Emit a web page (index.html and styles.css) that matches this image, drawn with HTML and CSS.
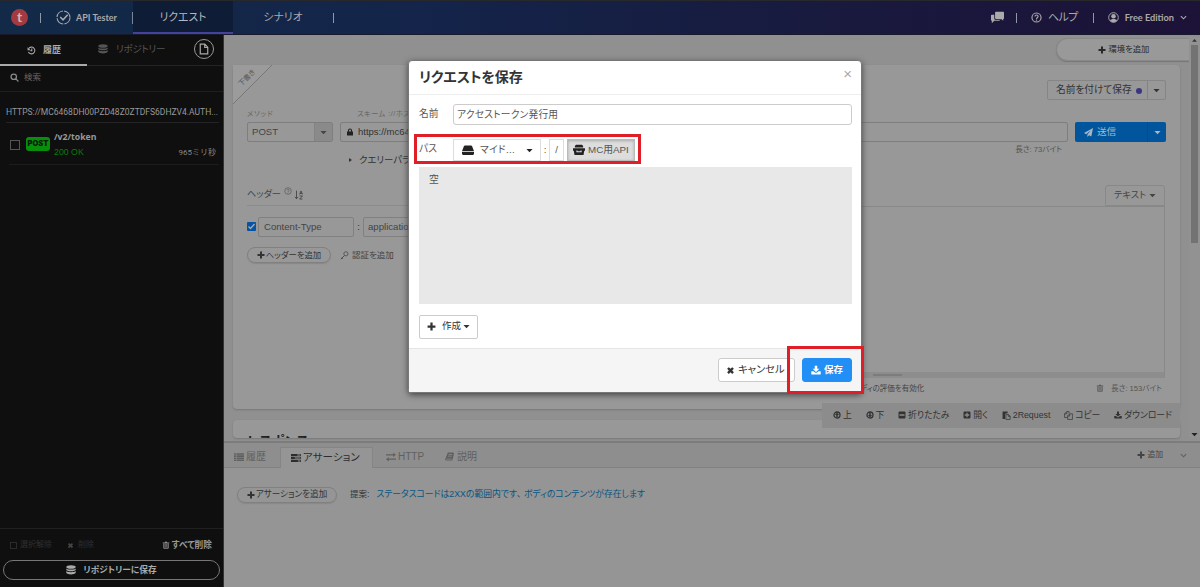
FILE: index.html
```html
<!DOCTYPE html>
<html lang="ja">
<head>
<meta charset="utf-8">
<title>API Tester</title>
<link rel="stylesheet" href="styles.css">
</head>
<body>
<svg class="sprite" width="0" height="0">
  <symbol id="plus" viewBox="0 0 16 16"><path d="M6 1h4v5h5v4h-5v5H6v-5H1V6h5z"/></symbol>
  <symbol id="times" viewBox="0 0 16 16"><path d="M2 5l3-3 3 3 3-3 3 3-3 3 3 3-3 3-3-3-3 3-3-3 3-3z"/></symbol>
  <symbol id="caret" viewBox="0 0 16 16"><path d="M1 4.500h14l-7 7.500z"/></symbol>
  <symbol id="chev" viewBox="0 0 16 16"><path d="M2 5l6 6 6-6" fill="none" stroke="currentColor" stroke-width="2.600"/></symbol>
  <symbol id="db" viewBox="0 0 16 16"><ellipse cx="8" cy="3.300" rx="7.500" ry="2.800"/><path d="M.5 5.400c2 2.500 13 2.500 15 0v2.700c-2 2.600-13 2.600-15 0zM.5 9.600c2 2.500 13 2.500 15 0v3.200c-2 3-13 3-15 0z"/></symbol>
  <symbol id="history" viewBox="0 0 16 16"><path d="M3 4.500A6 6 0 1 1 2.500 10.500M8.500 4.500v4H6" fill="none" stroke="currentColor" stroke-width="1.900"/><path d="M1 2v5.500h5.500z"/></symbol>
  <symbol id="search" viewBox="0 0 16 16"><path d="M10.500 10.500L15 15M11.500 6.700a4.800 4.800 0 1 1-9.600 0 4.800 4.800 0 0 1 9.600 0" fill="none" stroke="currentColor" stroke-width="2.300"/></symbol>
  <symbol id="file" viewBox="0 0 16 16"><path d="M3 1.500h6l4 4v9H3zM9 1.500V6h4" fill="none" stroke="currentColor" stroke-width="1.600"/></symbol>
  <symbol id="check" viewBox="0 0 16 16"><circle cx="8" cy="8" r="6.900" fill="none" stroke="currentColor" stroke-width="1.200" stroke-dasharray="9.400 1.430"/><path d="M4.500 7.500l3 3L12.500 5" fill="none" stroke="currentColor" stroke-width="1.600"/></symbol>
  <symbol id="chat" viewBox="0 0 16 16"><path d="M6 1h9q1 0 1 1v7q0 1-1 1v2l-2-2H7q-2 0-2-1V2q0-1 1-1z"/><path d="M4 4.500H1q-1 0-1 1V11q0 1 1 1v3l3-3h6q1 0 1-1H6q-2 0-2-2z"/></symbol>
  <symbol id="help" viewBox="0 0 16 16"><circle cx="8" cy="8" r="6.600" fill="none" stroke="currentColor" stroke-width="1.700"/><path d="M5.800 6.500c0-3 4.500-2.700 4.500 0C10.300 8 8 8 8 10M8 11v1.700" fill="none" stroke="currentColor" stroke-width="1.700"/></symbol>
  <symbol id="user" viewBox="0 0 16 16"><circle cx="8" cy="8" r="7" fill="none" stroke="currentColor" stroke-width="1.400"/><circle cx="8" cy="6.300" r="3.300"/><path d="M3 12.500c1-3 9-3 10 0-2 3-8 3-10 0z"/></symbol>
  <symbol id="lock" viewBox="0 0 16 16"><path d="M2 7h12v8H2z"/><path d="M5 8V5c0-4 6-4 6 0v3" fill="none" stroke="currentColor" stroke-width="2.200"/></symbol>
  <symbol id="sort" viewBox="0 0 16 16"><path d="M4 1v13M1.500 11L4 14l2.500-3M9 7l2.200-5.500L13.500 7M9.500 5.500h3.500M9 9.500h4.500L9 14.500h4.500" fill="none" stroke="currentColor" stroke-width="1.400"/></symbol>
  <symbol id="key" viewBox="0 0 16 16"><circle cx="10.500" cy="5" r="3.700" fill="none" stroke="currentColor" stroke-width="1.300"/><path d="M8 8l-6.500 6.500M3 12l2 2" fill="none" stroke="currentColor" stroke-width="1.500"/></symbol>
  <symbol id="plane" viewBox="0 0 16 16"><path d="M16 0L0 9l4 2 8-7-6 8v4l3-3 4 2z"/></symbol>
  <symbol id="trash" viewBox="0 0 16 16"><path d="M1.500 3H6l1-2h2l1 2h4.500v2h-13z"/><path d="M3.500 5.500v9h9v-9M6.300 6v7M9.700 6v7" fill="none" stroke="currentColor" stroke-width="1.700"/></symbol>
  <symbol id="up" viewBox="0 0 16 16"><circle cx="8" cy="8" r="6" fill="none" stroke="currentColor" stroke-width="2.600"/><path d="M8 3l4 5H9.500v4h-3V8H4z"/></symbol>
  <symbol id="down" viewBox="0 0 16 16"><circle cx="8" cy="8" r="6" fill="none" stroke="currentColor" stroke-width="2.600"/><path d="M8 13L4 8h2.500V4h3v4H12z"/></symbol>
  <symbol id="minus-sq" viewBox="0 0 16 16"><path fill-rule="evenodd" d="M3 1h10q2 0 2 2v10q0 2-2 2H3q-2 0-2-2V3q0-2 2-2zm0 5.700v2.600h10V6.700z"/></symbol>
  <symbol id="plus-sq" viewBox="0 0 16 16"><path fill-rule="evenodd" d="M3 1h10q2 0 2 2v10q0 2-2 2H3q-2 0-2-2V3q0-2 2-2zm3.700 2.500v3.200H3.500v2.600h3.200v3.200h2.600V9.300h3.200V6.700H9.300V3.500z"/></symbol>
  <symbol id="paste" viewBox="0 0 16 16"><path d="M1 1h9v3H7L5.500 6v8H1z"/><path d="M7 6h4l3.500 3v6H7zM11 6v3.500h3.500" fill="none" stroke="currentColor" stroke-width="1.300"/></symbol>
  <symbol id="copy" viewBox="0 0 16 16"><path d="M9 4V1H5L1 5v6.500h5M5 1v4H1M10 5h5v10H6.500V8.500zM10 5v4H6.500" fill="none" stroke="currentColor" stroke-width="1.200"/></symbol>
  <symbol id="dl" viewBox="0 0 16 16"><path d="M6 1h4v5h3.500L8 11 2.500 6H6z"/><path d="M.5 10H4l3 2.500h2L12 10h3.500v5H.5z"/></symbol>
  <symbol id="list" viewBox="0 0 16 16"><path d="M0 2h3v2.500H0zM4 2h12v2.500H4zM0 5.300h3v2.500H0zM4 5.300h12v2.500H4zM0 8.600h3v2.500H0zM4 8.600h12v2.500H4zM0 11.900h3v2.500H0zM4 11.900h12v2.500H4z"/></symbol>
  <symbol id="tasks" viewBox="0 0 16 16"><path fill-rule="evenodd" d="M0 1.500h16V5H0zm10 1v1.500h5V2.500zM0 6.300h16v3.500H0zm6 1v1.500h9V7.300zM0 11h16v3.500H0zm11 1v1.500h4V12z"/></symbol>
  <symbol id="swap" viewBox="0 0 16 16"><path d="M0 4.500h12M4 11.500h12" fill="none" stroke="currentColor" stroke-width="2"/><path d="M11.500 1l4.500 3.500L11.500 8zM4.500 8L0 11.500 4.500 15z"/></symbol>
  <symbol id="book" viewBox="0 0 16 16"><path fill-rule="evenodd" d="M5 1h10l1 2-3 12H2q-3-1-1-4zm1.500 2.500L6 5h6.500l.5-1.500zM5.500 6.500L5 8h6.500l.5-1.500zM2.500 12q-1 1.500.5 1.500h8.500L12 12z"/></symbol>
  <symbol id="drive" viewBox="0 0 16 16"><path d="M4 2h8q1 0 1.500 1L16 9.500H0L2.500 3Q3 2 4 2zM0 10.800h16V13q0 1.500-1.500 1.500h-13Q0 14.500 0 13z"/></symbol>
  <symbol id="box" viewBox="0 0 16 16"><path fill-rule="evenodd" d="M0 5.500h16V9h-1l-1 5.500H2L1 9H0zm4.500 3v2.500h7V8.500H10v1H6v-1z"/><path d="M2.500 2.500L4 1h8l1.500 1.500v2h-11z"/></symbol>
</svg>

<header class="topbar">
  <div class="brand">
    <span class="logo">t</span><i class="bar"></i>
    <svg class="i16"><use href="#check"/></svg><b>API Tester</b>
  </div>
  <nav class="nav"><a class="nav-on">リクエスト</a><a>シナリオ</a><i class="bar"></i></nav>
  <div class="account">
    <svg class="i13"><use href="#chat"/></svg><i class="bar"></i>
    <span class="help"><svg class="i11"><use href="#help"/></svg>ヘルプ</span><i class="bar"></i>
    <span class="edition"><svg class="i11"><use href="#user"/></svg><b>Free Edition</b><svg class="i7"><use href="#chev"/></svg></span>
  </div>
</header>

<div class="shell">
  <aside class="side">
    <div class="side-tabs">
      <div class="side-tab side-on"><svg class="i9"><use href="#history"/></svg>履歴</div>
      <div class="side-tab side-repo"><svg class="i10"><use href="#db"/></svg>リポジトリー</div>
      <span class="new"><svg class="i12"><use href="#file"/></svg></span>
    </div>
    <div class="side-search"><svg class="i9"><use href="#search"/></svg>検索</div>
    <div class="host">HTTPS://MC6468DH00PZD48Z0ZTDFS6DHZV4.AUTH...</div>
    <div class="entry">
      <i class="tick"></i><span class="verb">POST</span>
      <div class="entry-text"><b>/v2/token</b><span>200 OK</span></div>
      <span class="ms">965ミリ秒</span>
    </div>
    <div class="side-foot">
      <div class="side-actions"><i class="mini-box"></i><span>選択解除</span><svg class="i7"><use href="#times"/></svg><span>削除</span><b><svg class="i8"><use href="#trash"/></svg>すべて削除</b></div>
      <div class="side-save"><svg class="i10"><use href="#db"/></svg>リポジトリーに保存</div>
    </div>
  </aside>

  <main class="main">
    <section class="work">
      <div class="env-row"><div class="env"><svg class="i8"><use href="#plus"/></svg>環境を追加</div></div>
      <div class="card request">
        <div class="ribbon"><span>下書き</span></div>
        <div class="save-row"><div class="saveas"><span>名前を付けて保存</span><i class="dot"></i><em><svg class="i7"><use href="#caret"/></svg></em></div></div>
        <div class="labels"><span>メソッド</span><span>スキーム ://ホスト</span></div>
        <div class="url-row">
          <div class="method"><span>POST</span><em><svg class="i7"><use href="#caret"/></svg></em></div>
          <div class="url"><svg class="i8"><use href="#lock"/></svg>https://mc6468dh00pz</div>
          <div class="send"><svg class="i9"><use href="#plane"/></svg><span>送信</span><em><svg class="i7"><use href="#caret"/></svg></em></div>
        </div>
        <div class="url-sub"><span class="query"><i class="tri"></i>クエリーパラメーター</span><span class="len">長さ: 73バイト</span></div>
        <div class="cols">
          <div class="headers">
            <div class="headers-title">ヘッダー<svg class="i8 q"><use href="#help"/></svg><svg class="i10"><use href="#sort"/></svg></div>
            <div class="header-row"><span class="cb"><svg viewBox="0 0 9 9"><path d="M1.500 4.500l2 2 4-4.500" fill="none" stroke="#aaa" stroke-width="1.300"/></svg></span><div class="field key">Content-Type</div><span class="colon">:</span><div class="field val">application/json</div></div>
            <div class="header-actions"><div class="pill"><svg class="i8"><use href="#plus"/></svg>ヘッダーを追加</div><svg class="i9"><use href="#key"/></svg>認証を追加</div>
          </div>
          <div class="body">
            <div class="body-type"><span>テキスト<svg class="i7"><use href="#caret"/></svg></span></div>
            <div class="body-text"><i class="grip"></i></div>
            <div class="body-foot"><span>ボディの評価を有効化</span><span class="body-len"><svg class="i8"><use href="#trash"/></svg>長さ: 153バイト</span></div>
          </div>
        </div>
      </div>
      <div class="card response">レスポンス</div>
      <div class="tools">
        <span><svg class="i8"><use href="#up"/></svg>上</span><span><svg class="i8"><use href="#down"/></svg>下</span><span><svg class="i8"><use href="#minus-sq"/></svg>折りたたみ</span><span><svg class="i8"><use href="#plus-sq"/></svg>開く</span><span><svg class="i9"><use href="#paste"/></svg>2Request</span><span><svg class="i9"><use href="#copy"/></svg>コピー</span><span><svg class="i8"><use href="#dl"/></svg>ダウンロード</span>
      </div>
      <div class="scroll"><svg class="i7 flip"><use href="#caret"/></svg><i></i><svg class="i7 low"><use href="#caret"/></svg></div>
    </section>
    <section class="dock">
      <div class="dock-tabs">
        <span class="t1"><svg class="i10"><use href="#list"/></svg>履歴</span><span class="t2"><svg class="i10"><use href="#tasks"/></svg>アサーション</span><span class="t3"><svg class="i10"><use href="#swap"/></svg>HTTP</span><span class="t4"><svg class="i9"><use href="#book"/></svg>説明</span>
        <span class="add"><svg class="i8"><use href="#plus"/></svg>追加</span><svg class="i7 fold"><use href="#chev"/></svg>
      </div>
      <div class="dock-body"><div class="pill"><svg class="i8"><use href="#plus"/></svg>アサーションを追加</div><span class="hint">提案:</span><a>ステータスコードは2XXの範囲内です</a><span class="comma">、</span><a>ボディのコンテンツが存在します</a></div>
    </section>
  </main>
</div>

<div class="modal">
  <div class="modal-head"><h1>リクエストを保存</h1><span>×</span></div>
  <div class="modal-body">
    <div class="row"><label>名前</label><div class="name">アクセストークン発行用</div></div>
    <div class="row path"><label>パス</label><div class="pbtn drive"><svg class="i12"><use href="#drive"/></svg><span>マイド...</span><svg class="i7"><use href="#caret"/></svg></div><span class="sep">:</span><div class="pbtn root">/</div><div class="pbtn folder"><svg class="i12"><use href="#box"/></svg>MC用API</div></div>
    <div class="empty">空</div>
    <div class="create"><svg class="i9"><use href="#plus"/></svg><span>作成</span><svg class="i7"><use href="#caret"/></svg></div>
  </div>
  <div class="modal-foot"><div class="cancel"><svg class="i9"><use href="#times"/></svg>キャンセル</div><div class="save"><svg class="i10"><use href="#dl"/></svg>保存</div></div>
  <i class="mark mark-path"></i><i class="mark mark-save"></i>
</div>
</body>
</html>
```
FILE: styles.css
```css
* { box-sizing: border-box; }
body { margin: 0; width: 1200px; height: 587px; overflow: hidden; background: #959595; color: #333; font: 9px/1.2 "Liberation Sans", "Noto Sans CJK JP", sans-serif; font-feature-settings: "palt"; white-space: nowrap; }
svg { fill: currentColor; flex: none; display: block; }
.sprite { position: absolute; }
i, em { font-style: normal; flex: none; }
.i7 { width: 7px; height: 7px; } .i8 { width: 8px; height: 8px; } .i9 { width: 9px; height: 9px; }
.i10 { width: 10px; height: 10px; } .i11 { width: 11px; height: 11px; } .i12 { width: 12px; height: 12px; }
.i13 { width: 13px; height: 13px; } .i16 { width: 15px; height: 15px; }

/* top bar */
.topbar { height: 35px; display: flex; border-top: 1px solid #26282c; border-bottom: 1px solid #181a2b; background: linear-gradient(90deg, #122a47 0, #14244a 35%, #181a3e 68%, #1d1238 100%); color: #aaa; }
.topbar .bar { width: 1px; height: 10px; background: #9098a4; }
.brand { width: 133px; display: flex; align-items: center; padding-left: 11px; border-right: 1px solid #7a8597; border-image: linear-gradient(transparent 35%, #7a8597 35% 68%, transparent 68%) 1; }
.logo { width: 17px; height: 17px; border-radius: 50%; background: #a43a40; color: #c8b8ba; font: bold 14px/16px "Lato", sans-serif; text-align: center; }
.brand .bar { margin: 0 15px 0 12px; }
.brand b { margin-left: 5px; font: bold 9px "Lato", sans-serif; }
.nav { display: flex; align-items: center; height: 33px; font-size: 10.800px; }
.nav a { width: 100px; height: 33px; line-height: 32px; text-align: center; }
.nav .nav-on { background: #0e1c35; border-bottom: 2px solid #45429a; color: #b4b8c0; }
.account { margin-left: auto; display: flex; align-items: center; padding-right: 13px; }
.account .bar { margin: 0 14px 0 12px; }
.account .help + .bar { margin-left: 15px; }
.help, .edition { display: flex; align-items: center; gap: 6px; font-size: 11px; }
.help { letter-spacing: -.6px; }
.edition b { font: bold 9.200px "Lato", sans-serif; }

.shell { display: flex; height: 552px; }
/* history sidebar */
.side { width: 224px; background: #0f0f0f; color: #888; display: flex; flex-direction: column; border-right: 1px solid #333; }
.side-tabs { height: 31px; display: flex; align-items: center; border-bottom: 1px solid #242424; }
.side-tab { display: flex; align-items: center; height: 31px; gap: 7px; }
.side-on { width: 87px; padding: 2px 0 0 27px; border-bottom: 2px solid #aaa; color: #aaa; font-weight: bold; }
.side-repo { padding-left: 11px; gap: 8px; color: #555; font-size: 9.500px; letter-spacing: -.25px; padding-bottom: 2px; }
.new { margin: 0 9px 2px auto; width: 20px; height: 20px; border: 1px solid #999; border-radius: 50%; display: grid; place-items: center; color: #aaa; }
.side-search { height: 26px; border-bottom: 1px solid #1f1f1f; display: flex; align-items: center; gap: 5px; padding: 0 0 2px 10px; font-size: 8.500px; color: #666; }
.side-search svg { color: #888; }
.host { margin: 0 4px 0 6px; height: 31px; padding-top: 14px; border-bottom: 1px solid #242424; font: 8.520px/13px "Roboto", sans-serif; color: #999; }
.entry { height: 42px; margin: 0 4px 0 9px; border-bottom: 1px solid #1d1d1d; display: flex; align-items: center; }
.tick { width: 10px; height: 10px; border: 1px solid #555; margin: 2px 6px 0 1px; }
.verb { margin-top: 1px; width: 24px; height: 14px; border-radius: 3px; background: #078f0c; color: #071b08; font: 900 7.500px/14px "Inter", sans-serif; text-align: center; }
.entry-text { margin-left: 4px; display: flex; flex-direction: column; gap: 4px; padding-top: 2px; }
.entry-text b { font: bold 8.700px/12px "Open Sans", sans-serif; color: #999; }
.entry-text span { font-size: 8.800px; color: #087b0c; line-height: 11px; }
.ms { margin: 15px 3px 0 auto; font: 8.000px "Roboto", "Noto Sans CJK JP", sans-serif; }
.side-foot { margin-top: auto; height: 59px; border-top: 1px solid #202020; padding: 9px 3px 6px; }
.side-actions { display: flex; align-items: center; height: 14px; padding: 0 8px 0 7px; color: #2f2f2f; font-size: 8px; }
.side-actions svg { margin: 0 4px 0 15px; color: #444; }
.mini-box { width: 7px; height: 7px; border: 1px solid #2b2b2b; margin-right: 3px; }
.side-actions b { margin-left: auto; display: flex; align-items: center; color: #999; font-size: 8.700px; }
.side-actions b svg { margin: 0 2px 0 0; color: #999; }
.side-save { margin-top: 8px; height: 20px; border: 1px solid #777; border-radius: 10px; display: flex; align-items: center; justify-content: center; gap: 7px; color: #aaa; font-weight: bold; font-size: 8.700px; }

/* workspace */
.main { width: 976px; }
.work { position: relative; height: 406px; background: #909090; overflow: hidden; }
.env-row { height: 30px; padding: 3px 10px 0 0; display: flex; justify-content: flex-end; }
.env { width: 134px; height: 23px; border-radius: 12px 0 0 12px; border: 1px solid #888; border-width: 1px 0 1px 1px; background: #999; display: flex; align-items: center; justify-content: center; gap: 3px; font-size: 8.300px; color: #292929; box-shadow: 0 1px 1px #777; }
.card { position: relative; margin-left: 9px; width: 947px; background: #989898; border-radius: 4px; box-shadow: 0 1px 2px #777; }
.request { height: 344px; padding: 15px 14px 0; }
.ribbon { position: absolute; left: 0; top: 0; width: 39px; height: 39px; background: linear-gradient(135deg, #9b9b9b 49%, #777 49% 51%, transparent 51%); font-size: 7px; color: #555; }
.ribbon span { position: absolute; left: 4px; top: 9px; transform: rotate(-45deg); }
.save-row { height: 20px; display: flex; justify-content: flex-end; }
.saveas, .method, .send { display: flex; align-items: center; border: 1px solid #858585; border-radius: 2px; }
.saveas { width: 119px; height: 20px; font-size: 9.700px; padding-left: 8px; margin-right: 0; }
.saveas span { width: 79px; }
.dot { width: 6px; height: 6px; border-radius: 50%; background: #3a3683; margin: 1px 5px 0 2px; }
.saveas em, .method em, .send em { margin-left: auto; width: 18px; height: 18px; display: grid; place-items: center; border-left: 1px solid #838383; }
.labels { height: 22px; padding-top: 10px; display: flex; font-size: 7.200px; color: #666; letter-spacing: .5px; }
.labels span:first-child { width: 110px; letter-spacing: .7px; }
.url-row { display: flex; }
.method { width: 86px; height: 20px; padding-left: 4px; font-size: 9.600px; color: #444; border-color: #7e7e7e; }
.method em { background: #8a8a8a; }
.url { margin-left: 7px; width: 728px; height: 20px; border: 1px solid #7e7e7e; border-radius: 2px; display: flex; align-items: center; gap: 4px; padding-left: 5px; font-size: 9.500px; }
.url svg { color: #222; }
.send { margin-left: auto; width: 91px; height: 20px; background: #00559c; border: 0; color: #a9b7c3; padding-left: 9px; gap: 4px; font-size: 9.600px; }
.send em { border-color: #064b87; width: 19px; height: 20px; }
.url-sub { height: 43px; display: flex; justify-content: space-between; padding: 11px 104px 0 102px; font-size: 9.400px; }
.query { display: flex; gap: 7px; height: 14px; align-items: center; }
.tri { border: 2.500px solid transparent; border-left: 3px solid #333; border-right: 0; }
.len { margin-top: -8px; font-size: 7.600px; color: #555; }
.cols { display: grid; grid-template-columns: 567px 1fr; margin: 0 1px 0 0; }
.headers-title { height: 21px; display: flex; align-items: center; font-size: 9.200px; color: #444; border-bottom: 1px solid #8c8c8c; padding-bottom: 1px; }
.headers-title .q { margin: -8px 2px 0 3px; color: #666; }
.header-row { display: flex; align-items: center; height: 41px; font-size: 9.600px; }
.cb { width: 9px; height: 9px; border-radius: 1px; background: #0652a3; margin-right: 2px; }
.field { height: 20px; border: 1px solid #808080; border-radius: 2px; line-height: 18px; padding-left: 5px; color: #444; }
.key { width: 96px; } .val { width: 180px; padding-left: 4px; } .colon { width: 9px; text-align: center; }
.pill { display: flex; align-items: center; justify-content: center; gap: 1px; height: 16px; border: 1px solid #808080; border-radius: 9px; font-size: 8.600px; box-shadow: 0 1px 1px #888; }
.header-actions { display: flex; align-items: center; font-size: 8.500px; color: #444; }
.header-actions .pill { width: 84px; margin-right: 9px; color: #333; font-size: 8.400px; } .header-actions > svg { margin-right: 3px; }
.body-type { display: flex; justify-content: flex-end; height: 22px; border-bottom: 1px solid #888; }
.body-type span { width: 60px; border: 1px solid #888; border-radius: 3px 3px 0 0; display: flex; align-items: center; justify-content: center; gap: 3px; font-size: 9.300px; color: #444; }
.body-text { height: 171px; border-right: 1px solid #888; border-bottom: 6px solid #8d8d8d; display: flex; align-items: flex-end; padding-left: 59px; }
.grip { width: 29px; height: 2px; margin: 0 0 -4px; background: #7c7c7c; }
.body-foot { display: flex; justify-content: space-between; padding: 6px 3px 0 39px; font-size: 7.500px; color: #444; }
.body-len { display: flex; gap: 7px; font-size: 7.600px; color: #555; }
.response { margin-top: 11px; height: 18px; overflow: hidden; padding: 12px 0 0 14px; font-size: 13.200px; font-weight: bold; line-height: 20px; color: #222; }
.tools { position: absolute; right: 20px; top: 368px; width: 358px; height: 25px; display: flex; align-items: center; justify-content: space-between; padding: 0 8px 0 11px; background: #8c8c8c; font-size: 8.800px; color: #333; }
.tools span { display: flex; align-items: center; gap: 2px; }
.scroll { position: absolute; right: 0; top: 2px; bottom: 3px; width: 11px; background: #929292; display: flex; flex-direction: column; align-items: center; }
.scroll i { width: 7px; height: 198px; background: #737373; margin-top: 1px; }
.flip { transform: rotate(180deg) scale(.8); } .low { margin-top: auto; color: #222; }

/* bottom dock */
.dock { height: 146px; border-top: 2px solid #7c7c7c; background: #959595; }
.dock-tabs { height: 25px; display: flex; background: #8e8e8e; border-bottom: 1px solid #818181; padding-left: 1px; font-size: 10px; color: #606060; }
.dock-tabs span { display: flex; align-items: center; gap: 2px; padding: 3px 0 0 9px; }
.dock-tabs .t1 { width: 55px; }
.dock-tabs .t2 { width: 93px; background: #959595; color: #2d2d2d; margin-top: 4px; height: 21px; border: 1px solid #858585; border-bottom: 0; padding: 0 0 1px 10px; font-size: 10.500px; }
.dock-tabs .t3 { width: 65px; padding-left: 13px; } .dock-tabs .t4 { padding-left: 7px; gap: 3px; }
.dock-tabs .add { margin-left: auto; font-size: 7.800px; color: #444; padding: 0; }
.fold { margin: 9px 13px 0 17px; }
.dock-body { height: 53px; display: flex; align-items: center; padding-left: 13px; font-size: 8.800px; }
.dock-body .pill { width: 100px; font-size: 8.600px; } .hint { margin: 0 7px 0 13px; font-size: 8.500px; } .dock-body a { color: #075480; }
.comma { width: 7px; color: #075480; }

/* save dialog */
.modal { position: absolute; left: 408px; top: 60px; width: 454px; height: 333px; background: #fff; border: 1px solid #777; border-radius: 4px; box-shadow: 0 2px 6px #444; display: flex; flex-direction: column; color: #333; }
.modal-head { height: 34px; border-bottom: 1px solid #eee; padding: 0 9px 0 10px; display: flex; align-items: center; justify-content: space-between; }
.modal-head h1 { margin: -2px 0 0; font-size: 14px; line-height: 16px; letter-spacing: -.1px; }
.modal-head span { font-size: 15px; color: #aaa; margin-top: -8px; }
.modal-body { height: 253px; padding: 9px 9px 0; }
.row { display: flex; align-items: center; font-size: 9.700px; color: #555; }
.row label { width: 35px; padding-left: 1px; margin-top: -2px; }
.name { width: 399px; height: 21px; border: 1px solid #ccc; border-radius: 3px; padding-left: 3px; line-height: 19px; letter-spacing: .25px; }
.path { height: 22px; margin: 14px 0 6px; }
.pbtn { height: 22px; border: 1px solid #ddd; display: flex; align-items: center; }
.pbtn svg { color: #222; }
.drive { width: 88px; padding: 0 7px 0 8px; gap: 6px; letter-spacing: .35px; } .drive svg:last-child { margin-left: auto; }
.sep { width: 8px; text-align: center; } .root { width: 15px; justify-content: center; }
.folder { margin-left: 3px; width: 68px; gap: 3px; padding-left: 5px; background: #ddd; border-color: #bbb; box-shadow: inset 0 1px 3px #aaa; font-size: 9.800px; }
.empty { height: 137px; background: #e8e8e8; padding: 7px 10px; font-size: 9.800px; color: #555; margin-left: 1px; }
.create { margin: 11px 0 0 1px; width: 59px; height: 24px; border: 1px solid #ccc; border-radius: 2px; display: flex; align-items: center; padding: 0 0 2px 7px; font-size: 9.500px; gap: 2px; }
.create span { margin-left: 4px; }
.modal-foot { flex: 1; background: #f5f5f5; border-top: 1px solid #e5e5e5; display: flex; justify-content: flex-end; align-items: center; gap: 7px; padding: 0 9px 1px; }
.cancel, .save { height: 24px; border: 1px solid #ccc; border-radius: 3px; display: flex; align-items: center; font-size: 10.300px; background: #fff; }
.cancel { width: 77px; padding-left: 7px; gap: 3px; } .save { width: 50px; justify-content: center; gap: 3px; background: #218ff5; border-color: #218ff5; color: #fff; font-weight: bold; font-size: 9.500px; }
.mark { position: absolute; border: 3px solid #df1f27; }
.mark-path { left: 5px; top: 73px; width: 227px; height: 30px; }
.mark-save { left: 378px; top: 285px; width: 77px; height: 48px; }
```
